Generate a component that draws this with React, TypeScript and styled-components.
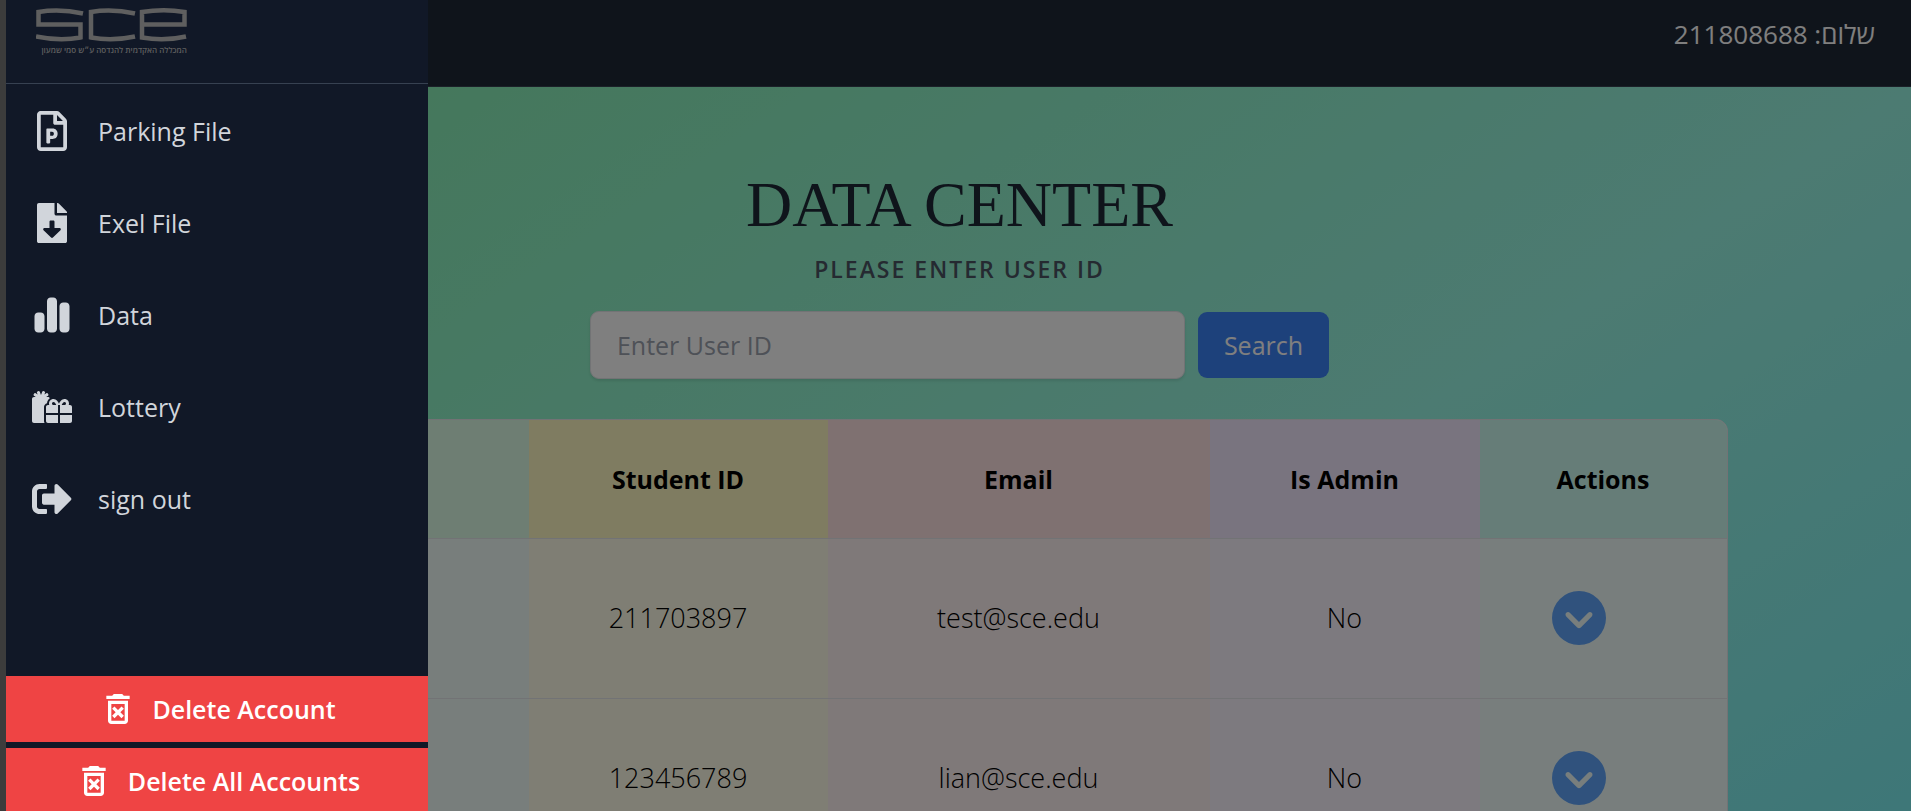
import React from "react";
import styled, { createGlobalStyle } from "styled-components";
import { FaRegFilePowerpoint, FaFileDownload, FaGifts, FaSignOutAlt } from "react-icons/fa";
import { FaChartSimple, FaCircleChevronDown } from "react-icons/fa6";
import { MdOutlineDeleteForever } from "react-icons/md";

const GlobalStyle = createGlobalStyle`
  *, *::before, *::after { box-sizing: border-box; }
  html, body { height: 100%; }
  body {
    margin: 0;
    overflow: hidden;
    font-family: "Open Sans", "Noto Sans", sans-serif;
    font-size: 25px;
    line-height: 36px;
    color: #000;
  }
  button, input { font: inherit; }
  #root { height: 100%; }
`;

const Page = styled.div`
  height: 100vh;
  overflow: hidden;
`;

const TopBar = styled.header`
  display: flex;
  justify-content: flex-end;
  height: 87px;
  padding: 16px 36px;
  background: #1f2937;
  border-bottom: 1px solid #374151;
  color: #fff;
  font-size: 26px;
`;

const Main = styled.main`
  display: flex;
  flex-direction: column;
  align-items: center;
  min-height: 1250px;
  padding: 80px 32px 0 40px;
  background: linear-gradient(to bottom right, #86efac, #99f6e4, #67e8f9);
`;

const Title = styled.h1`
  margin: 0;
  font: 400 64px/76px "Liberation Serif", serif;
  color: #1f2937;
`;

const SearchForm = styled.form`
  display: flex;
  flex-direction: column;
  align-items: center;
  gap: 24px;
  margin-bottom: 40px;
`;

const SearchLabel = styled.label`
  padding-top: 8px;
  font-size: 23px;
  line-height: 36px;
  font-weight: 600;
  letter-spacing: 2px;
  color: #4b5563;
`;

const SearchRow = styled.div`
  display: flex;
  align-items: center;
  gap: 13px;
`;

const SearchInput = styled.input`
  width: 595px;
  height: 68px;
  padding: 0 26px;
  border: 1px solid #e5e7eb;
  border-radius: 9px;
  background: #fff;
  box-shadow: 0 2px 3px rgba(0, 0, 0, 0.1);
  &::placeholder { color: #9ca3af; opacity: 1; }
`;

const SearchButton = styled.button`
  height: 66px;
  padding: 0 26px;
  border: 0;
  border-radius: 9px;
  background: #3b82f6;
  color: #fff;
`;

const TableCard = styled.div`
  width: 100%;
  max-width: 1536px;
  overflow: hidden;
  border: 1px solid #e5e7eb;
  border-radius: 12px;
  background: #fff;
`;

const Table = styled.table`
  width: 100%;
  table-layout: fixed;
  border-collapse: collapse;
`;

const Col = styled.col<{ $width?: number }>`
  width: ${(p) => (p.$width ? `${p.$width}px` : "auto")};
`;

const HeadCell = styled.th<{ $tone: string }>`
  height: 118px;
  padding: 0 24px;
  background: ${(p) => p.$tone};
  font-weight: 700;
`;

const Cell = styled.td<{ $tone: string; $start?: boolean }>`
  height: 160px;
  padding: 0 ${(p) => (p.$start ? 72 : 24)}px;
  border-top: 1px solid #e5e7eb;
  background: ${(p) => p.$tone};
  font-size: 27px;
  font-weight: 300;
  text-align: ${(p) => (p.$start ? "left" : "center")};
`;

const ActionButton = styled.button`
  display: block;
  padding: 0;
  border: 0;
  background: none;
  color: #60a5fa;
  svg { display: block; width: 54px; height: 54px; }
`;

const Overlay = styled.div`
  position: fixed;
  inset: 0;
  background: rgba(0, 0, 0, 0.5);
`;

const Drawer = styled.aside`
  position: fixed;
  inset: 0 auto 0 0;
  display: flex;
  flex-direction: column;
  width: 428px;
  border-left: 6px solid #3c3c3c;
  background: #111827;
`;

const Brand = styled.div`
  display: flex;
  flex-direction: column;
  height: 84px;
  padding: 8px 30px 0;
  border-bottom: 1px solid #374151;
  color: #5f5f5f;
  svg { display: block; width: 151px; height: 35px; }
`;

const Tagline = styled.span`
  width: 151px;
  font-size: 8px;
  line-height: 14px;
  font-weight: 600;
  white-space: nowrap;
  direction: rtl;
`;

const Menu = styled.nav`
  display: flex;
  flex: 1;
  flex-direction: column;
  padding-top: 1px;
`;

const MenuLink = styled.a`
  display: flex;
  align-items: center;
  gap: 26px;
  height: 92px;
  padding: 0 26px;
  color: #d1d5db;
  text-decoration: none;
  svg { width: 40px; height: 40px; }
`;

const DangerZone = styled.div`
  display: flex;
  flex-direction: column;
  gap: 6px;
  margin-bottom: -3px;
`;

const DangerButton = styled.button`
  display: flex;
  align-items: center;
  justify-content: center;
  gap: 14px;
  height: 66px;
  border: 0;
  background: #ef4444;
  color: #fff;
  font-weight: 600;
  svg { width: 40px; height: 40px; }
`;

const columns = [
  { label: "Name", head: "#dcfce7", body: "#f0fdf8" },
  { label: "Student ID", width: 299, head: "#fef9c3", body: "#fefce8" },
  { label: "Email", width: 382, head: "#fee2e2", body: "#fef2f2" },
  { label: "Is Admin", width: 270, head: "#f3e8ff", body: "#faf5ff" },
  { label: "Actions", width: 247, head: "#ccfbf1", body: "#f0fdfa" },
];

const users = [
  { name: "", id: "211703897", email: "test@sce.edu", admin: "No" },
  { name: "", id: "123456789", email: "lian@sce.edu", admin: "No" },
];

const menu = [
  { label: "Parking File", Icon: FaRegFilePowerpoint },
  { label: "Exel File", Icon: FaFileDownload },
  { label: "Data", Icon: FaChartSimple },
  { label: "Lottery", Icon: FaGifts },
  { label: "sign out", Icon: FaSignOutAlt },
];

const Logo = () => (
  <svg viewBox="0 0 151 35" fill="none" stroke="currentColor" strokeWidth="4.500" aria-hidden="true">
    <path d="M47 5.500Q24 .5 2.500 4V16.500H44.500V29.500Q24 33.500 0 28.500" />
    <path d="M99 5.500Q76 .5 55 4V29.500Q76 33.500 99 28.500" />
    <path d="M150 28.500Q128 33.500 106 29.500V4Q128 .5 148.500 4V16.500H106" />
  </svg>
);

export default function App() {
  return (
    <>
      <GlobalStyle />
      <Page>
        <TopBar>
          <span dir="rtl">שלום: 211808688</span>
        </TopBar>
        <Main>
          <Title>DATA CENTER</Title>
          <SearchForm onSubmit={(e) => e.preventDefault()}>
            <SearchLabel htmlFor="user-id">PLEASE ENTER USER ID</SearchLabel>
            <SearchRow>
              <SearchInput id="user-id" type="text" placeholder="Enter User ID" />
              <SearchButton type="submit">Search</SearchButton>
            </SearchRow>
          </SearchForm>
          <TableCard>
            <Table>
              <colgroup>
                {columns.map((c) => (
                  <Col key={c.label} $width={c.width} />
                ))}
              </colgroup>
              <thead>
                <tr>
                  {columns.map((c, i) => (
                    <HeadCell key={c.label} $tone={c.head} scope="col">
                      {i > 0 && c.label}
                    </HeadCell>
                  ))}
                </tr>
              </thead>
              <tbody>
                {users.map((u) => (
                  <tr key={u.id}>
                    <Cell $tone={columns[0].body}>{u.name}</Cell>
                    <Cell $tone={columns[1].body}>{u.id}</Cell>
                    <Cell $tone={columns[2].body}>{u.email}</Cell>
                    <Cell $tone={columns[3].body}>{u.admin}</Cell>
                    <Cell $tone={columns[4].body} $start>
                      <ActionButton type="button" aria-label="Show actions">
                        <FaCircleChevronDown />
                      </ActionButton>
                    </Cell>
                  </tr>
                ))}
              </tbody>
            </Table>
          </TableCard>
        </Main>
      </Page>
      <Overlay />
      <Drawer>
        <Brand>
          <Logo />
          <Tagline>המכללה האקדמית להנדסה ע״ש סמי שמעון</Tagline>
        </Brand>
        <Menu>
          {menu.map(({ label, Icon }) => (
            <MenuLink key={label} href="#">
              <Icon />
              {label}
            </MenuLink>
          ))}
        </Menu>
        <DangerZone>
          <DangerButton type="button">
            <MdOutlineDeleteForever />
            Delete Account
          </DangerButton>
          <DangerButton type="button">
            <MdOutlineDeleteForever />
            Delete All Accounts
          </DangerButton>
        </DangerZone>
      </Drawer>
    </>
  );
}
